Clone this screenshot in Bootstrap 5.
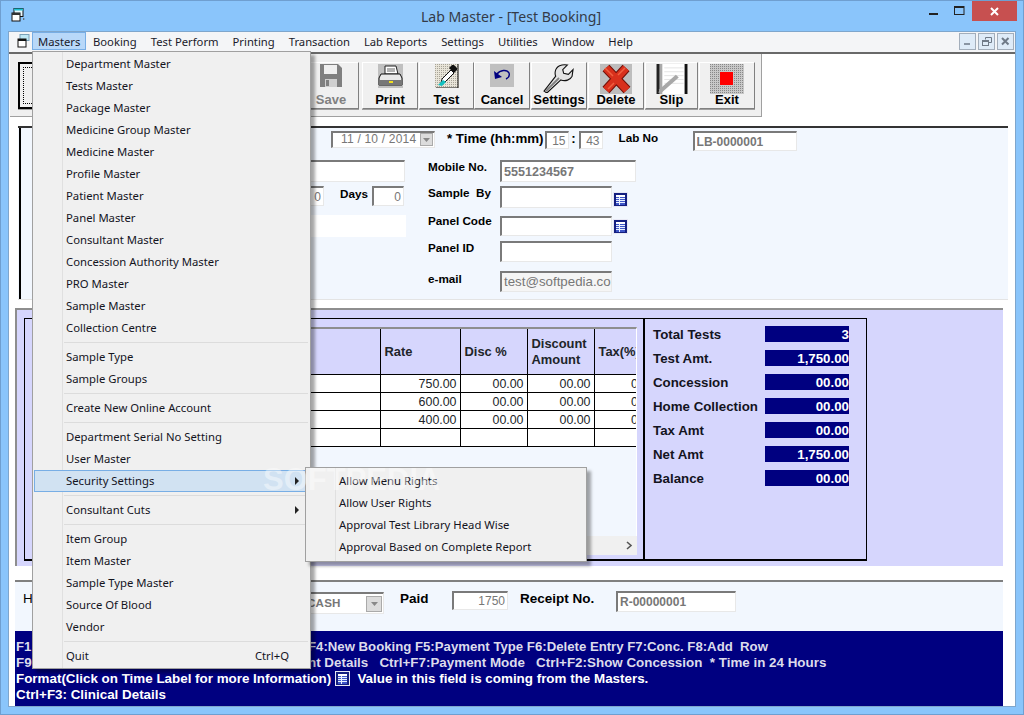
<!DOCTYPE html>
<html lang="en">
<head>
<meta charset="utf-8">
<title>Lab Master - [Test Booking]</title>
<link href="https://cdn.jsdelivr.net/npm/bootstrap@5.3.0/dist/css/bootstrap.min.css" rel="stylesheet">
<style>
html,body{margin:0;background:#8ac5fb;overflow:hidden}
.win{position:relative;width:1024px;height:715px;background:#8ac5fb;border:1px solid #6f9fd0;overflow:hidden;font-family:"Liberation Sans",Arial,sans-serif;color:#000}
.ttl{height:30px;position:relative}
.ttl-text{font:14.1px/31px "Noto Sans",sans-serif;color:#333b48;text-align:center;width:1020px}
.app-ic{position:absolute;left:10px;top:7px}
.ctl{position:absolute;right:6px;top:0;display:flex;align-items:flex-start}
.ctl span{display:flex;align-items:center;justify-content:center;height:20px}
.c-min,.c-max{width:26px}
.c-close{width:45px;background:#c75050}
.client{margin:0 7px;height:676px;background:#fff;border:1px solid #7fa6cc}
.mbar{height:20px;background:#f4f5f7;font:11.25px/18px "Noto Sans",sans-serif;padding-left:23px;color:#101828;position:relative}
.mbar-ic{position:absolute;left:7px;top:2px}
.mitem{padding:0 6px;height:18px;border:1px solid transparent;color:#1a1a2a;white-space:nowrap}
.mitem.on{background:#b8d8f9;border-color:#78aee5;width:54px;padding:0 0 0 5px}
.mdi{position:absolute;right:1px;top:1px;gap:2px}
.mdi span{width:17px;height:17px;border:1px solid #a3aebb;background:#deebf8;display:flex;align-items:center;justify-content:center}
.tb-wrap{border-top:2px solid #696969;height:74px}
.tb{margin-left:1px;width:752px;height:63px;background:#f0f0f0;padding:8px 0 0 8px;border-bottom:1px solid #a0a0a0;border-right:1px solid #a0a0a0}
.tbtn{width:56px;height:47px;flex:none;background:#f0f0f0;border:1px solid;border-color:#fff #808080 #808080 #fff;box-shadow:0 1px 0 #a0a0a0;padding:0;border-radius:0;font:bold 13px/15px "Liberation Sans",sans-serif;color:#000;display:flex;flex-direction:column;align-items:center;white-space:nowrap;overflow:visible}
.tbtn .ic{height:29px;display:flex;align-items:flex-start;justify-content:center;width:100%}
.tbtn .ic svg{margin-top:1px}
.tbtn.first{width:285px;border:2px solid #000;outline:1px dotted #000;outline-offset:-6px}
.tbtn.dis:disabled{opacity:1;background:#f0f0f0;color:#808080;border-color:#fff #808080 #808080 #fff}
.tbtn.g1{margin-left:1px}
.tbtn.g3{margin-left:3px}
.tbtn.w55{width:55px}
.tbtn.w53{width:53px}
.pan1{margin-left:9px;width:990px;height:174px;background:#f2f7fe;border-top:2px solid #333;border-bottom:1px solid #e4e4e4;font:bold 11.7px/14px "Liberation Sans",sans-serif}
.pan1-in{border-left:2px solid #000;height:100%;margin-left:1px}
.fld{display:block;border:1px solid;border-width:2px 1px 1px 2px;border-color:#7a7a7a #e8e8e8 #e8e8e8 #7a7a7a;background:#fff;border-radius:0;padding:0 2px;font:12px/14px "Liberation Sans",sans-serif;color:#777;min-height:0;box-shadow:none}
.fld.bold{font-weight:bold}
.fld.end{text-align:right}
.fld.mob{width:136px;height:22px;font-size:12.6px}
.fld.hm{width:24px;height:18px}
.fld.lab{width:104px;height:20px}
.fld.day{width:33px;height:20px}
.fld.day2{width:32px;height:20px}
.fld.mail{height:21px;line-height:18px;background:#f5f5f5;font-size:13.3px}
.fld.paid{width:56px;height:19px;margin-top:9px}
.fld.rcpt{width:120px;height:21px;margin-top:9px}
.h22{height:22px}.h21{height:21px}.h20{height:20px}
.row1{height:29px;padding:3px 0 0 310px;align-items:flex-start}
.combo{width:104px;height:17px;font:12px/13px "Liberation Sans",sans-serif;color:#777;padding:0 0 0 8px;position:relative;letter-spacing:.2px;white-space:nowrap}
.combo-b{position:absolute;right:1px;top:0;width:13px;height:13px;background:#dcdcdc;border:1px solid #aaa;display:flex;align-items:center;justify-content:center}
.combo.cash{width:84px;height:22px;margin:10px 0 0 7px;font-size:11.6px;line-height:18px;padding-left:5px;font-weight:bold}
.combo.cash .combo-b{top:2px;height:16px;width:16px}
.tm{font-size:13.3px;line-height:16px;margin:0 1px 0 12px;white-space:nowrap}
.tm.colon{margin:0;width:10px;text-align:center}
.labno{margin-left:16px;width:74px}
.main1{padding-top:3px}
.lc{width:384px;padding-left:20px;display:grid;grid-template-rows:26px 29px 22px;grid-template-columns:1fr;align-items:start}
.lc .sp{width:250px}
.lc .dayl{width:48px;padding:1px 0 0 16px}
.rc{margin-left:23px;display:grid;grid-template-columns:72px 112px 16px;grid-template-rows:26px 30px 25px 30px 21px;align-items:start}
.rc svg{margin-left:1px}
.ic1{margin-top:6px}.ic2{margin-top:3px}
.up2{margin-top:-2px}.dn1{padding-top:1px}
.strip{height:22px;background:#fff;margin-right:-1px}
.pan2{margin-left:6px;width:988px;height:258px;margin-top:8px;background:#d6d6fd;border-top:2px solid #8e8e8e;border-left:2px solid #8e8e8e;padding:8px 0 0 7px}
.gridbox{width:619px;height:243px;border:1px solid #000;border-right:0;border-bottom-width:2px;padding:8px 6px 0 7px;flex:none}
.gridin{height:209px;background:#f2f7fe;border-top:2px solid #8e8e8e;border-right:1px solid #fff;overflow:hidden}
.tbl{border-collapse:collapse;table-layout:fixed;margin:0;width:609px;font:12.4px/14px "Liberation Sans",sans-serif;--bs-table-bg:transparent}
.tbl th{background:#d6d6fd;height:45px;font:bold 12.9px/16px "Liberation Sans",sans-serif;padding:1px 0 0 4px;border:1px solid #000;border-top:0;vertical-align:middle;white-space:nowrap;overflow:hidden}
.tbl td{background:#fff;height:18px;padding:1px 3px 0;border:1px solid #000;text-align:right;vertical-align:middle;overflow:hidden;white-space:nowrap}
.tbl tr>*:last-child{border-right:0}
.tbl tr>*:first-child{border-left:0}
.sbar{height:19px;background:#f0f0f0;display:flex;justify-content:flex-end;align-items:center;padding-right:4px}
.sumbox{width:224px;height:243px;border:1px solid #000;border-left-width:2px;border-bottom-width:2px;padding:7px 0 0 8px;flex:none;font:bold 13.3px/16px "Liberation Sans",sans-serif}
.sumrow{height:24px}
.sumlab{width:112px;white-space:nowrap;color:#14141e;padding-top:1px}
.sumval{width:84px;height:16px;background:#000080;color:#fff;text-align:right;padding-top:1px;line-height:15px}
.pan3{margin-left:6px;width:988px;height:51px;margin-top:14px;background:#f2f7fe;border-top:2px solid #808080;font:bold 13.5px/16px "Liberation Sans",sans-serif;padding-left:8px}
.pan3 .lb{white-space:nowrap;padding-top:9px}
.lb.h1w{width:270px;font-weight:normal}
.lb.paidl{width:52px;margin-left:16px}
.lb.rcptl{margin-left:12px;width:96px}
.navy{margin-left:6px;width:988px;height:75px;background:#000080;color:#fff;font:bold 13.4px/16px "Liberation Sans",sans-serif;padding:8px 0 0 1px;white-space:pre}
.navy .thin{color:#dcdcec}
.navy .line1{font-size:13.2px}
.navy .hid{display:inline-block;width:292px}
.menu-a,.menu-b{display:block;border-radius:0;border:1px solid #a0a0a0;background:linear-gradient(90deg,#f0f0f0 29px,#e0e0e0 29px,#e0e0e0 30px,#f0f0f0 30px);margin:0;box-shadow:4px 4px 3px rgba(0,0,0,.35);font:12px/22px "Noto Sans",sans-serif;min-width:0}
.menu-a{left:31px;top:50px;width:279px;padding:1px 0;z-index:5}
.menu-b{left:304px;top:466px;width:282px;height:95px;padding:2px 0;z-index:6}
.mi{display:flex;justify-content:space-between;height:22px;padding:0 20px 0 32px;color:#14141e;font-size:11.3px;line-height:22px;position:relative;margin:0 1px;white-space:nowrap}
.menu-b .mi{padding-left:32px;padding-right:8px}
.mi.hot{background:#d1e2f2;outline:1px solid #78aee5;outline-offset:-1px}
.msep{height:1px;background:#dcdcdc;margin:3px 2px 3px 31px;border:0;opacity:1}
.arr{position:absolute;right:10px;top:7px;width:0;height:0;border-left:4px solid #222;border-top:4px solid transparent;border-bottom:4px solid transparent}
.wm{position:absolute;left:262px;top:461px;z-index:7;font:bold 31px/36px "Liberation Sans",sans-serif;color:#fff;opacity:.42;pointer-events:none}
</style>
</head>
<body>
<svg width="0" height="0" class="d-none"><defs>
<symbol id="cal" viewBox="0 0 15 15"><rect width="15" height="15" fill="#e8e8f4"/><rect x="1" y="1" width="13" height="13" fill="#141f80"/><rect x="3" y="3" width="9" height="10" fill="#3f56c8"/><rect x="3" y="3" width="9" height="2" fill="#fff"/><path d="M3 6.500h9M3 8.500h9M3 10.500h9" stroke="#e8f0ff" stroke-width="1"/><path d="M6.500 5v8" stroke="#e8f0ff"/></symbol>
</defs></svg>
<div class="win">
  <div class="ttl">
    <svg class="app-ic" width="14" height="14" viewBox="0 0 14 14"><rect x="3" y="0.5" width="9" height="8" fill="#e8f8ff" stroke="#111"/><rect x="3" y="0.5" width="9" height="2" fill="#20c0d0"/><rect x="1" y="5" width="8" height="8" fill="#fff" stroke="#111"/><rect x="1" y="5" width="8" height="2" fill="#333"/><path d="M12 10l2 1-2 1z" fill="#555"/></svg>
    <div class="ttl-text">Lab Master - [Test Booking]</div>
    <div class="ctl">
      <span class="c-min"><svg width="9" height="10" viewBox="0 0 9 10"><rect y="7" width="9" height="2" fill="#222"/></svg></span>
      <span class="c-max"><svg width="11" height="10" viewBox="0 0 11 10"><rect x=".5" y=".5" width="9.500" height="8" fill="none" stroke="#222"/><rect x="0" y="0" width="10" height="2" fill="#222"/></svg></span>
      <span class="c-close"><svg width="9" height="9" viewBox="0 0 9 9"><path d="M1 1l7 7M8 1l-7 7" stroke="#fff" stroke-width="2"/></svg></span>
    </div>
  </div>
  <div class="client">
    <nav class="mbar d-flex">
      <svg class="mbar-ic" width="18" height="15" viewBox="0 0 18 15"><rect x="4" y="0.5" width="9" height="6" fill="#bfe8f5" stroke="#78a0b8"/><rect x="2" y="5" width="8" height="8" fill="#fff" stroke="#111"/><rect x="2" y="5" width="8" height="2" fill="#111"/></svg>
      <span class="mitem on">Masters</span><span class="mitem">Booking</span><span class="mitem">Test Perform</span><span class="mitem">Printing</span><span class="mitem">Transaction</span><span class="mitem">Lab Reports</span><span class="mitem">Settings</span><span class="mitem">Utilities</span><span class="mitem">Window</span><span class="mitem">Help</span>
      <div class="mdi d-flex">
        <span><svg width="9" height="9" viewBox="0 0 9 9"><rect x="1" y="6" width="6" height="2" fill="#8a95a3"/></svg></span>
        <span><svg width="10" height="10" viewBox="0 0 10 10"><path d="M3.500 2.500V.5h6v5H7" fill="none" stroke="#6f7a88"/><rect x=".5" y="3.500" width="6" height="5" fill="none" stroke="#6f7a88"/><rect x="0" y="3" width="7" height="2" fill="#6f7a88"/></svg></span>
        <span><svg width="9" height="9" viewBox="0 0 9 9"><path d="M1 1l6.500 6.500M7.500 1L1 7.500" stroke="#6f7a88" stroke-width="2"/></svg></span>
      </div>
    </nav>
    <div class="tb-wrap">
      <div class="tb d-flex">
        <button class="tbtn first" type="button" aria-label="New"></button>
        <button class="tbtn dis" type="button" disabled><span class="ic"><svg width="22" height="23" viewBox="0 0 22 23"><path d="M0 0h18l4 4v19H0z" fill="#808080"/><rect x="4" y="1" width="13" height="9" fill="#f0f0f0"/><rect x="5" y="15" width="12" height="8" fill="#d0d0d0"/><rect x="6" y="16" width="3" height="6" fill="#808080"/></svg></span>Save</button>
        <button class="tbtn g3" type="button"><span class="ic"><svg width="25" height="24" viewBox="0 0 25 24"><rect width="25" height="24" fill="#c0c0c0"/><path d="M7 2h11l2 8H7z" fill="#fff" stroke="#222"/><path d="M3 10h19l2 4v7H1v-7z" fill="#e8e8e8" stroke="#111"/><rect x="1" y="16" width="23" height="5" fill="#777"/><rect x="11" y="17" width="4" height="2" fill="#f0e020"/><path d="M9 5h8M9 7h8" stroke="#666"/></svg></span>Print</button>
        <button class="tbtn g1 w55" type="button"><span class="ic"><svg width="24" height="24" viewBox="0 0 24 24"><defs><pattern id="dt" width="2" height="2" patternUnits="userSpaceOnUse"><rect width="2" height="2" fill="#e8e4d8"/><rect width="1" height="1" fill="#a8a498"/></pattern></defs><rect width="24" height="24" fill="url(#dt)"/><path d="M23 0v24H1" fill="none" stroke="#111"/><path d="M7 15l9-9 3 3-9 9-4 1z" fill="#fff" stroke="#111"/><path d="M14 4l3-3 2 0 3 3 0 2-3 3z" fill="#111"/><path d="M3 21l5-5 3 2-4 4z" fill="#10c0c0"/></svg></span>Test</button>
        <button class="tbtn" type="button"><span class="ic"><svg width="24" height="23" viewBox="0 0 24 23"><rect width="24" height="23" fill="#c0c0c0"/><path d="M7 10c3-4 10-5 12-1 1 3-1 5-3 6" fill="none" stroke="#000080" stroke-width="1.400"/><path d="M4 7l1 8 7-2z" fill="#000080"/></svg></span>Cancel</button>
        <button class="tbtn g1" type="button"><span class="ic"><svg width="34" height="29" viewBox="0 0 34 31"><path d="M1 29l3 2 15-14c5 2 10 0 12-4l1-7-5 5-5-1-1-4 5-5c-6-1-12 1-13 7-.5 3 0 4 .5 5z" fill="#e4e4e4" stroke="#111" stroke-width="1.200"/><path d="M3 29l14-14" stroke="#808080" stroke-width="2"/></svg></span>Settings</button>
        <button class="tbtn g1" type="button"><span class="ic"><svg width="32" height="30" viewBox="0 0 32 30"><rect width="32" height="30" fill="#bdbdbd"/><path d="M6 4l21 22M26 4L6 26" stroke="#701008" stroke-width="9.500"/><path d="M6 4l21 22M26 4L6 26" stroke="#d8301c" stroke-width="7.500"/><path d="M5 4l8 8M25 4l-7 7M8 25l6-6" stroke="#f06040" stroke-width="1.500"/></svg></span>Delete</button>
        <button class="tbtn g1 w53" type="button"><span class="ic"><svg width="32" height="30" viewBox="0 0 32 31"><rect width="32" height="31" fill="#fff"/><rect x="0" width="5" height="31" fill="#222"/><rect x="3" width="3" height="31" fill="#aaa"/><rect x="29" width="3" height="31" fill="#111"/><path d="M8 4h20M8 8h20M8 12h20M8 16h20M8 20h20" stroke="#e4e4e4"/><path d="M2 30l1-4 17-15 3 3-17 15z" fill="#a8a8a8"/></svg></span>Slip</button>
        <button class="tbtn g1" type="button"><span class="ic"><svg width="34" height="30" viewBox="0 0 34 30"><defs><pattern id="dg" width="2" height="2" patternUnits="userSpaceOnUse"><rect width="2" height="2" fill="#c8c8c8"/><rect width="1" height="1" fill="#888"/></pattern></defs><rect width="34" height="30" fill="url(#dg)"/><rect x="10" y="8" width="13" height="13" fill="#ff0000"/></svg></span>Exit</button>
      </div>
    </div>

    <section class="pan1">
      <div class="pan1-in">
        <div class="row1 d-flex">
          <div class="fld combo">11 / 10 / 2014<span class="combo-b"><svg width="7" height="4" viewBox="0 0 7 4"><path d="M0 0h7L3.500 4z" fill="#888"/></svg></span></div>
          <span class="tm">* Time (hh:mm)</span>
          <input class="form-control fld end hm" value="15" aria-label="Hour">
          <span class="tm colon">:</span>
          <input class="form-control fld end hm" value="43" aria-label="Minute">
          <span class="labno">Lab No</span>
          <input class="form-control fld bold lab" value="LB-0000001" aria-label="Lab No">
        </div>
        <div class="main1 d-flex">
          <div class="lc">
            <div class="fld h22"></div>
            <div class="d-flex align-items-start">
              <span class="sp"></span>
              <input class="form-control fld end day" value="0" aria-label="Months">
              <span class="dayl">Days</span>
              <input class="form-control fld end day2" value="0" aria-label="Days">
            </div>
            <div class="strip"></div>
          </div>
          <div class="rc">
            <span>Mobile No.</span><input class="form-control fld bold mob" value="5551234567" aria-label="Mobile"><span></span>
            <span>Sample &nbsp;By</span><div class="fld h22"></div><svg class="ic1" width="15" height="15"><use href="#cal"/></svg>
            <span class="up2">Panel Code</span><div class="fld h20"></div><svg class="ic2" width="15" height="15"><use href="#cal"/></svg>
            <span>Panel ID</span><div class="fld h21"></div><span></span>
            <span class="dn1">e-mail</span><div class="fld mail overflow-hidden text-nowrap">test@softpedia.com</div><span></span>
          </div>
        </div>
      </div>
    </section>

    <section class="pan2 d-flex">
      <div class="gridbox">
        <div class="gridin">
          <table class="table tbl">
            <colgroup><col style="width:348px"><col style="width:80px"><col style="width:67px"><col style="width:67px"><col></colgroup>
            <thead><tr><th></th><th>Rate</th><th>Disc %</th><th>Discount<br>Amount</th><th>Tax(%)</th></tr></thead>
            <tbody>
              <tr><td></td><td>750.00</td><td>00.00</td><td>00.00</td><td>0</td></tr>
              <tr><td></td><td>600.00</td><td>00.00</td><td>00.00</td><td>0</td></tr>
              <tr><td></td><td>400.00</td><td>00.00</td><td>00.00</td><td>0</td></tr>
              <tr><td></td><td></td><td></td><td></td><td></td></tr>
            </tbody>
          </table>
        </div>
        <div class="sbar"><svg width="7" height="9" viewBox="0 0 7 9"><path d="M1 1l4 3.500-4 3.500" fill="none" stroke="#555" stroke-width="1.600"/></svg></div>
      </div>
      <div class="sumbox">
        <div class="sumrow d-flex"><span class="sumlab">Total Tests</span><span class="sumval">3</span></div>
        <div class="sumrow d-flex"><span class="sumlab">Test Amt.</span><span class="sumval">1,750.00</span></div>
        <div class="sumrow d-flex"><span class="sumlab">Concession</span><span class="sumval">00.00</span></div>
        <div class="sumrow d-flex"><span class="sumlab">Home Collection</span><span class="sumval">00.00</span></div>
        <div class="sumrow d-flex"><span class="sumlab">Tax Amt</span><span class="sumval">00.00</span></div>
        <div class="sumrow d-flex"><span class="sumlab">Net Amt</span><span class="sumval">1,750.00</span></div>
        <div class="sumrow d-flex"><span class="sumlab">Balance</span><span class="sumval">00.00</span></div>
      </div>
    </section>

    <section class="pan3 d-flex align-items-start">
      <span class="lb h1w">H</span>
      <div class="fld combo cash">CASH<span class="combo-b"><svg width="7" height="4" viewBox="0 0 7 4"><path d="M0 0h7L3.500 4z" fill="#888"/></svg></span></div>
      <span class="lb paidl">Paid</span>
      <input class="form-control fld end paid" value="1750" aria-label="Paid">
      <span class="lb rcptl">Receipt No.</span>
      <input class="form-control fld bold rcpt" value="R-00000001" aria-label="Receipt No">
    </section>
    <footer class="navy"><div class="thin line1"><span class="hid">F1</span>F4:New Booking F5:Payment Type F6:Delete Entry F7:Conc. F8:Add  Row</div><div class="thin"><span class="hid">F9</span>nt Details   Ctrl+F7:Payment Mode   Ctrl+F2:Show Concession  * Time in 24 Hours</div><div>Format(Click on Time Label for more Information) <svg width="15" height="15" class="align-text-bottom"><use href="#cal"/></svg>  Value in this field is coming from the Masters.</div><div>Ctrl+F3: Clinical Details</div></footer>
  </div>

  <div class="dropdown-menu position-absolute menu-a">
    <div class="mi">Department Master</div><div class="mi">Tests Master</div><div class="mi">Package Master</div><div class="mi">Medicine Group Master</div><div class="mi">Medicine Master</div><div class="mi">Profile Master</div><div class="mi">Patient Master</div><div class="mi">Panel Master</div><div class="mi">Consultant Master</div><div class="mi">Concession Authority Master</div><div class="mi">PRO Master</div><div class="mi">Sample Master</div><div class="mi">Collection Centre</div>
    <hr class="msep">
    <div class="mi">Sample Type</div><div class="mi">Sample Groups</div>
    <hr class="msep">
    <div class="mi">Create New Online Account</div>
    <hr class="msep">
    <div class="mi">Department Serial No Setting</div><div class="mi">User Master</div><div class="mi hot">Security Settings<i class="arr"></i></div>
    <hr class="msep">
    <div class="mi">Consultant Cuts<i class="arr"></i></div>
    <hr class="msep">
    <div class="mi">Item Group</div><div class="mi">Item Master</div><div class="mi">Sample Type Master</div><div class="mi">Source Of Blood</div><div class="mi">Vendor</div>
    <hr class="msep">
    <div class="mi">Quit<span>Ctrl+Q</span></div>
  </div>
  <div class="dropdown-menu position-absolute menu-b">
    <div class="mi">Allow Menu Rights</div><div class="mi">Allow User Rights</div><div class="mi">Approval Test Library Head Wise</div><div class="mi">Approval Based on Complete Report</div>
  </div>
  <div class="wm">SOFTPEDIA</div>
</div>
<script src="https://cdn.jsdelivr.net/npm/bootstrap@5.3.0/dist/js/bootstrap.bundle.min.js"></script>
</body>
</html>
